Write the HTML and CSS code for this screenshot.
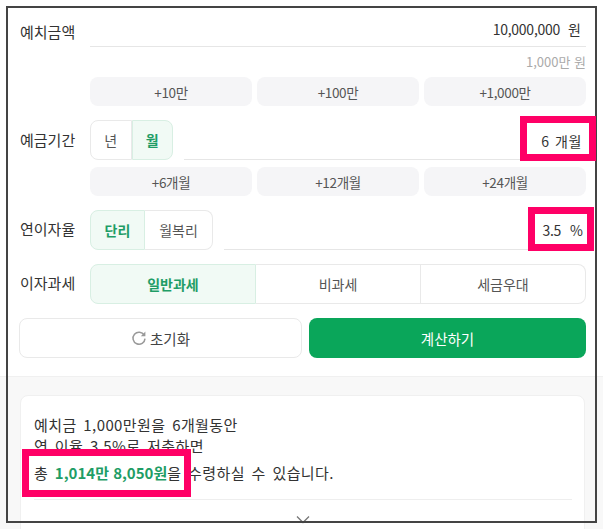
FILE: index.html
```html
<!DOCTYPE html>
<html lang="ko">
<head>
<meta charset="utf-8">
<title>예금 계산기</title>
<link rel="stylesheet" href="styles.css">
</head>
<body>
<main class="page">
  <section class="form">
    <div class="row">
      <div class="label label-first">예치금액</div>
      <div class="field">
        <div class="input input-amount"><span class="num">10,000,000</span><span>원</span></div>
        <div class="hint">1,000만 원</div>
        <div class="quick"><button>+10만</button><button>+100만</button><button>+1,000만</button></div>
      </div>
    </div>
    <div class="row row-period">
      <div class="label">예금기간</div>
      <div class="field">
        <div class="combo">
          <div class="seg seg-period"><button>년</button><button class="on">월</button></div>
          <div class="input input-period"><span>6</span><span class="unit">개월</span></div>
        </div>
        <div class="quick quick-tight"><button>+6개월</button><button>+12개월</button><button>+24개월</button></div>
      </div>
    </div>
    <div class="row row-rate">
      <div class="label">연이자율</div>
      <div class="field">
        <div class="combo">
          <div class="seg seg-rate"><button class="on">단리</button><button>월복리</button></div>
          <div class="input input-rate"><span class="num">3.5</span><span>%</span></div>
        </div>
      </div>
    </div>
    <div class="row row-tax">
      <div class="label">이자과세</div>
      <div class="field">
        <div class="seg seg-tax"><button class="on">일반과세</button><button>비과세</button><button>세금우대</button></div>
      </div>
    </div>
    <div class="actions">
      <button class="reset">
        <svg class="reset-icon" viewBox="0 0 16 16" width="16" height="16" aria-hidden="true"><path d="M13.2 5.2A6 6 0 1 0 14 8.6" fill="none" stroke="#999" stroke-width="1.5"/><path d="M14.4 1.6v4.6H9.8z" fill="#999"/></svg>
        <span>초기화</span>
      </button>
      <button class="calc">계산하기</button>
    </div>
  </section>
  <section class="result">
    <div class="card">
      <p class="line">예치금 1,000만원을 6개월동안</p>
      <p class="line">연 이율 3.5%로 저축하면</p>
      <p class="line total">총 <strong>1,014만 8,050원</strong>을 수령하실 수 있습니다.</p>
      <div class="more">
        <svg viewBox="0 0 16 10" width="16" height="10" aria-hidden="true"><path d="M2 1.5 8 7.5l6-6" fill="none" stroke="#777" stroke-width="1.3"/></svg>
      </div>
    </div>
  </section>
</main>
<div class="frame"></div>
<div class="mark mark-period"></div>
<div class="mark mark-rate"></div>
<div class="mark mark-total"></div>
</body>
</html>
```
FILE: styles.css
```css
* { box-sizing: border-box; }
html, body { margin: 0; height: 529px; overflow: hidden; background: #fff; }
body {
  position: relative;
  font-family: "Noto Sans CJK KR", "Noto Sans", sans-serif;
  font-size: 14px;
  color: #333;
}
button { font: inherit; padding: 0; cursor: pointer; background: none; border: 0; color: #555; }
p { margin: 0; }

.form { padding: 20px 17px 18px 20px; height: 376px; }
.row { display: flex; }
.label { width: 70px; flex: none; font-size: 15px; line-height: 22px; color: #333; }
.label-first { padding-top: 1px; }
.field { flex: 1; min-width: 0; }

.input {
  flex: 1;
  height: 27px;
  display: flex;
  justify-content: flex-end;
  align-items: center;
  gap: 8px;
  padding-right: 5px;
  border-bottom: 1px solid #e6e6e6;
  font-size: 14px;
  color: #333;
}
.input-amount { height: 27px; padding-bottom: 9px; padding-right: 5px; }
.input-period { gap: 6px; padding-top: 2px; padding-right: 4px; }
.input-rate { padding-right: 3px; gap: 9px; }
.num { letter-spacing: -.25px; }
.unit { letter-spacing: .6px; }
.hint { height: 30px; padding-top: 6px; text-align: right; font-size: 13px; line-height: 18px; color: #aaa; }
.quick { display: grid; grid-template-columns: repeat(3, 1fr); gap: 5px; }
.quick button { height: 29px; border-radius: 8px; background: #f5f5f7; font-size: 13.5px; letter-spacing: -.35px; color: #555; }

.row-period { margin-top: 14px; }
.row-period .label { padding-top: 9px; }
.combo { display: flex; align-items: flex-end; gap: 11px; height: 40px; }
.combo .input { height: 40px; }
.quick-tight { margin-top: 7px; }

.seg { display: flex; height: 40px; flex: none; }
.seg button { border: 1px solid #e9e9e9; border-left-width: 0; font-size: 14px; color: #555; background: #fff; }
.seg button:first-child { border-left-width: 1px; border-radius: 8px 0 0 8px; }
.seg button:last-child { border-radius: 0 8px 8px 0; }
.seg button.on { background: #f1faf5; color: #1f9d66; font-weight: 700; border-color: #d8efe3; border-left-width: 1px; }
.seg-period { width: 83px; }
.seg-period button { flex: 1; }
.seg-rate { width: 123px; }
.seg-rate button:first-child { width: 55px; }
.seg-rate button:last-child { flex: 1; }
.seg-tax { display: grid; grid-template-columns: 166px 165px 165px; }

.row-rate { margin-top: 14px; }
.row-rate .label, .row-tax .label { padding-top: 8px; }
.row-tax { margin-top: 14px; }

.actions { display: flex; gap: 7px; margin-top: 14px; margin-left: -1px; }
.reset {
  width: 283px;
  height: 40px;
  display: flex;
  align-items: center;
  justify-content: center;
  gap: 3px;
  border: 1px solid #e9e9e9;
  border-radius: 8px;
  font-size: 14.5px;
  color: #444;
}
.reset-icon { flex: none; }
.calc { flex: 1; height: 40px; border-radius: 8px; background: #0aa65a; color: #fff; font-size: 14.5px; }

.result { height: 153px; padding: 18px 18px 0 20px; background: #f8f8f8; border-top: 1px solid #f0f0f0; }
.card { height: 160px; padding: 18px 12px 0 13px; background: #fff; border: 1px solid #f0f0f0; border-radius: 8px 8px 0 0; }
.line { font-size: 15px; letter-spacing: .42px; word-spacing: 2px; line-height: 21px; color: #333; }
.total { margin-top: 6px; }
.total strong { color: #1f9d66; font-weight: 700; letter-spacing: 0; word-spacing: 0; }
.more { margin-top: 16px; padding-top: 15px; border-top: 1px solid #eee; display: flex; justify-content: center; }

.frame { position: absolute; left: 6px; top: 6px; width: 591px; height: 517px; border: 2px solid #444; pointer-events: none; }
.mark { position: absolute; border: 7px solid #ff0066; pointer-events: none; }
.mark-period { left: 520px; top: 116px; width: 76px; height: 45px; }
.mark-rate { left: 528px; top: 207px; width: 66px; height: 44px; }
.mark-total { left: 22px; top: 449px; width: 169px; height: 48px; }
```
